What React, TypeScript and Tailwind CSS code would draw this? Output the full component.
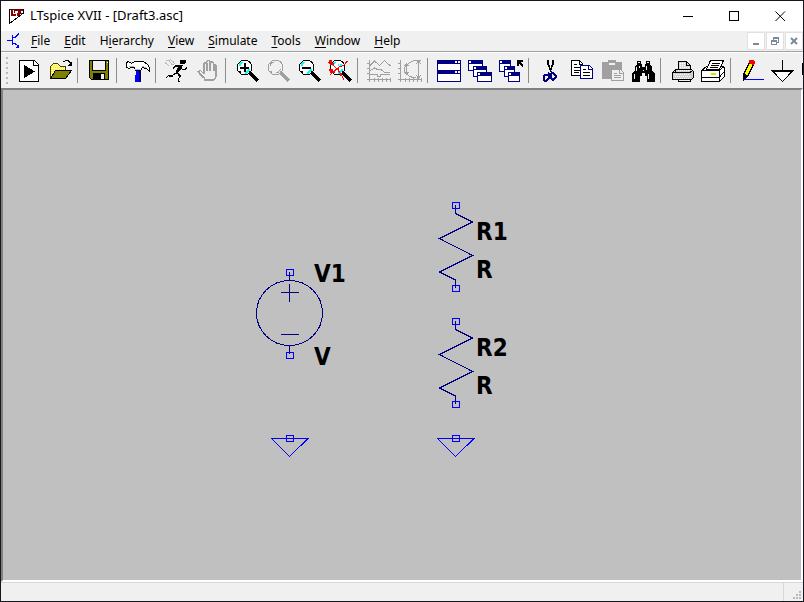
import type { ReactNode } from 'react'

const NAVY = '#000080'
const BLUE = '#0000ff'
const OLIVE = '#808000'
const GRAY = '#a0a0a0'

interface IconProps {
  children: ReactNode
  stroke?: string
}

function Icon({ children, stroke = '#000' }: IconProps) {
  return (
    <svg width="25" height="25" viewBox="0 0 25 25" fill="none" stroke={stroke} shapeRendering="crispEdges" aria-hidden="true">
      {children}
    </svg>
  )
}

const RunIcon = () => (
  <Icon>
    <path d="M2.5 2.5H17.5L21.5 6.5V23.5H2.5Z" fill="#fff" />
    <path d="M16.5 2.5V7.5H21.5" />
    <path d="M7 7L18 13.5L7 20Z" fill="#000" stroke="none" />
  </Icon>
)

const OpenIcon = () => (
  <Icon>
    <path d="M2.5 19.5V8.5L5.5 5.5H9.5L12.5 8.5H17.5V12.5H8.5Z" fill="#fff9a0" stroke="none" />
    <path d="M4 7.5h6M3 9.5h14M3 11.5h14M3 13.5h5M3 15.5h3" stroke="#ffe800" strokeDasharray="1 1" />
    <path d="M2.5 20V8.5L5.5 5.5H9.5L12.5 8.5H17.5V12.5" stroke="#404000" />
    <path d="M7.5 12.5H23.5L17.5 20.5H2.5Z" fill={OLIVE} />
    <path d="M15 3.5H17M17 2.5H20L22.5 5" />
    <path d="M24 3V8H19Z" fill="#000" stroke="none" />
  </Icon>
)

const SaveIcon = () => (
  <Icon>
    <path d="M2.5 2.5H21.5V21.5H4.5L2.5 19.5Z" fill={OLIVE} />
    <path d="M5.5 2.5H18.5V12.5H5.5Z" fill="#f0f0f0" />
    <path d="M6 15H18V22H6Z" fill="#000" stroke="none" />
    <path d="M14 16H17V21H14Z" fill="#f0f0f0" stroke="none" />
    <path d="M20 4.5h1" stroke="#fff" />
  </Icon>
)

const HammerIcon = () => (
  <Icon>
    <path d="M10 13H14V17H15V24H9V17H10Z" fill="#0000ff" stroke="none" />
    <path d="M14 13V24" stroke="#000060" strokeWidth="2" />
    <path d="M.5 9V4.5L2.5 3.5L5.5 5.5L8.5 3.5H17.5L21.5 6.5L23.5 9.5V13.5L20.5 10.5L16.5 9.5L14.5 12.5H9.5L8.5 9.5H5.5L2.5 10.5Z" fill="#fff" />
    <path d="M9 11.5H14M3 8.5H8M16 8.5L20 9.5" stroke="#b0b0b0" />
  </Icon>
)

const RunnerIcon = () => (
  <Icon>
    <path d="M15 2H21V4L19 6H15Z" fill="#000" stroke="none" />
    <path d="M14 7H18L16 11L13 15L10 16L12 11Z" fill="#000" stroke="none" />
    <path d="M15 7.5H10.5L7.5 11.5M16 9L17.5 11.5H20L22 9.5M11 15L7.5 17.5H4L1 19.5M12 14.5L15.5 18L13.5 21V23.5H15" />
    <path d="M10 8H14M4 18H8M14 17L16 19" strokeWidth="2" />
    <path d="M1 2.5H4L7 6.5H9M5 1.5L8 3.5L10 6M0 4.5L4 7.5" stroke="#b8b8b8" />
  </Icon>
)

const HandIcon = () => (
  <Icon stroke={GRAY}>
    <path d="M8.5 22.5V20.5L3.5 16.5L2.5 13.5L4.5 12.5L7.5 15.5V5.5L8.5 4.5L10.5 5.5V3.5L12.5 2.5L14.5 3.5V4.5L16.5 3.5L17.5 5.5V7L19.5 6.5L20.5 8.5V18.5L17.5 22.5Z" />
    <path d="M11 5V13M14 4V13M17.5 6V13M8 5V16M19.5 8V19M9 22H18" strokeWidth="2" />
    <path d="M2 13L4 15.5L8 20" strokeWidth="2" />
  </Icon>
)

const Glass = ({ disabled = false, children }: { disabled?: boolean; children?: ReactNode }) => (
  <Icon stroke={disabled ? GRAY : '#000'}>
    <path d="M15 15L23 23" strokeWidth="3" />
    <path d="M6.5 2.5H12.5L14.5 4.5L16.5 6.5V12.5L12.5 16.5H6.5L2.5 12.5V6.5Z" fill={disabled ? 'none' : '#fff'} />
    <path d="M3 5.5H5.5V3M14 3L16 6M3 13.5H5.5V16M14 13V16" />
    <path d="M4.5 8V6.5L7.5 4M14.5 11L12 14.5H10" stroke={disabled ? GRAY : '#00ffff'} strokeWidth={disabled ? 1 : 2} />
    {children}
  </Icon>
)

const ZoomInIcon = () => (
  <Glass>
    <path d="M5 9.5H14M9.5 5V14" strokeWidth="2" />
  </Glass>
)

const ZoomOutIcon = () => (
  <Glass>
    <path d="M5 9.5H14" strokeWidth="2" />
  </Glass>
)

const ZoomFitIcon = () => (
  <Glass>
    <path d="M0 4.5L4 6L9 11L13 16L16 22M19.5 3L16 7L11 9L5 14L2 17" stroke="#f00" />
    <path d="M1 2H4V5H6V7H2V5H1ZM1 11H5V13H7V15H2V13H1ZM8 10H11V12H8ZM12 15H14V18H12Z" fill="#f00" stroke="none" />
    <path d="M12 6H14V8H12ZM10 6H11V8H10Z" fill="#00ffff" stroke="none" />
  </Glass>
)

const WaveformIcon = () => (
  <Icon stroke={GRAY}>
    <path d="M2.5 2V24M0 5.5H3M0 10.5H3M0 15.5H3M0 21.5H24M7.5 20V24M11.5 20V24M15.5 20V24M19.5 20V24M23.5 20V24" />
    <path d="M3 7.5L7.5 3L12.5 7.5L17.5 2.5L23.5 8M3 12.5L7.5 10L10.5 11.5H14L18 14.5H23M3 16.5H10V18.5H13V16.5H23" />
  </Icon>
)

const FftIcon = () => (
  <Icon stroke={GRAY}>
    <path d="M2.5 2V24M0 5.5H3M0 10.5H3M0 15.5H3M0 21.5H24M7.5 20V24M11.5 20V24M15.5 20V24M19.5 20V24M23.5 20V24" />
    <path d="M22.5 2.5H16.5L11.5 4.5L6.5 9.5V13.5L11.5 18.5L17.5 20M20.5 3V20M18 6L20.5 3L23 6M18 17L20.5 20L23 17M8.5 6V16M6.5 8L8.5 5.5L10.5 8M6.5 14L8.5 16.5L10.5 14" />
  </Icon>
)

interface MiniWindowProps {
  x: number
  y: number
  w: number
  h: number
  buttons?: boolean
}

const MiniWindow = ({ x, y, w, h, buttons = false }: MiniWindowProps) => (
  <g transform={`translate(${x} ${y})`} stroke="none">
    <rect width={w} height={h} fill={NAVY} />
    <rect x="1" y="4" width={w - 2} height={h - 5} fill="#fff" />
    <path d={buttons ? `M${w - 3} 1h2v2h-2zM${w - 6} 1h2v2h-2z` : 'M1 1h2v2h-2z'} fill="#fff" />
  </g>
)

const TileIcon = () => (
  <Icon>
    <MiniWindow x={0} y={2} w={24} h={11} buttons />
    <MiniWindow x={0} y={12} w={24} h={12} buttons />
  </Icon>
)

const CascadeIcon = () => (
  <Icon>
    <MiniWindow x={0} y={2} w={15} h={11} />
    <MiniWindow x={5} y={8} w={14} h={11} />
    <MiniWindow x={9} y={14} w={15} h={10} />
  </Icon>
)

const CloseAllIcon = () => (
  <Icon>
    <MiniWindow x={0} y={2} w={12} h={12} />
    <MiniWindow x={5} y={8} w={11} h={11} />
    <MiniWindow x={9} y={14} w={12} h={10} />
    <path d="M18 2H24V4H21L24 7V9H23L20 6V8H18Z" fill="#000" stroke="none" />
  </Icon>
)

const CutIcon = () => (
  <Icon>
    <path d="M10.5 2V6L12.5 11M14.5 2V6L12.5 11V14" />
    <path d="M9.5 2V6L12.5 12.5M15.5 2V6L12.5 12.5" />
    <path d="M11 14.5L10.5 17.5V20.5L8.5 22.5H6.5L5.5 20.5V18L7.5 16.5H10M13 14L15.5 15.5L17.5 17V19.5L15.5 21.5H14.5L12.5 19.5V15" stroke={NAVY} strokeWidth="2" />
  </Icon>
)

const CopyIcon = () => (
  <Icon>
    <path d="M2.5 2.5H10.5L13.5 5.5V17.5H2.5Z" fill="#fff" />
    <path d="M10.5 2V6H14M5 6.5H8M5 9.5H11M5 12.5H11M5 14.5H10" />
    <path d="M11.5 7.5H20.5L23.5 10.5V20.5H11.5Z" fill="#fff" stroke={NAVY} />
    <path d="M19.5 7V11H24" stroke={NAVY} />
    <path d="M14 11.5H17M14 14.5H21M14 17.5H21" />
  </Icon>
)

const PasteIcon = () => (
  <Icon stroke={GRAY}>
    <path d="M2 4H8V2H16V4H22V21H2Z" fill={GRAY} stroke="none" />
    <path d="M9 5H15V7H9Z" fill="#f0f0f0" stroke="none" />
    <path d="M11.5 11.5H20.5L23.5 14.5V22.5H11.5Z" fill="#f0f0f0" />
    <path d="M19.5 11V15H24M14 15.5H17M14 17.5H21M14 19.5H21" />
  </Icon>
)

const FindIcon = () => (
  <Icon>
    <path d="M6 3H10V6H11V9H14V6H15V3H19V6L21 9V12L24 16V24H16V18H14V15H11V18H9V24H1V16L4 12V9L6 6Z" fill="#000" stroke="none" />
    <path d="M7 4.5H9M16 4.5H18M5.5 9V13M15.5 8V12M3.5 16V21M17.5 16V21M8.5 8V10M12 12.5H13" stroke="#f0f0f0" />
  </Icon>
)

const PrintIcon = () => (
  <Icon>
    <path d="M2.5 21.5V14.5L5.5 11.5H21.5L23.5 13.5V19.5L21.5 21.5Z" fill="#d0d0d0" />
    <path d="M8.5 11.5V3.5H16.5L20.5 7.5V11.5Z" fill="#d8d8d8" />
    <path d="M16.5 3V7.5H21M5.5 11.5V14M2 14.5H20L23 12M8.5 22V23.5H20.5V22" />
    <path d="M4 16.5H20M5 18.5H20M4 20.5H20M10 5.5H15M10 7.5H15M10 9.5H19M8 12.5H19" stroke="#fff" strokeDasharray="1 1" />
  </Icon>
)

const PrintSetupIcon = () => (
  <Icon>
    <path d="M.5 12.5L5.5 8.5H22.5L23.5 10.5V18.5L18.5 23.5H.5Z" fill="#fff" />
    <path d="M5.5 11.5L9.5 2.5H22.5L18.5 11.5Z" fill="#fff" />
    <path d="M11 5.5H19M10 7.5H18M9 9.5H17M0 12.5H18.5V23M18.5 12.5L23 8M0 19.5H18L23 14M20 17L24 13" />
    <path d="M10 16H15" stroke="#e0e000" strokeWidth="2" />
  </Icon>
)

const WireIcon = () => (
  <Icon>
    <path d="M3.5 16.5L9.5 4.5L13.5 6.5L7.5 18.5L3.5 21.5Z" fill="#ffff00" />
    <path d="M4 15L8 18L4 23H3Z" fill="#000" stroke="none" />
    <path d="M9 2H13L15 3V6L13 7L9 5Z" fill="#f00" stroke="none" />
    <path d="M4 21.5H24" stroke={BLUE} />
  </Icon>
)

const GroundIcon = () => (
  <Icon>
    <path d="M11.5 2V12" />
    <path d="M1 12.5H22L11.5 23.5Z" fill="#fff" />
    <path d="M0 12.5H23" />
    <path d="M1 13.5H22M3 15L11.5 23.5L20 15" />
  </Icon>
)

const LabelIcon = () => (
  <Icon>
    <path d="M.5 5.5H12L18 11L12 16.5H.5Z" fill="#fff" />
  </Icon>
)

const toolGroups = [
  [
    { label: 'Run', icon: <RunIcon /> },
    { label: 'Open', icon: <OpenIcon /> },
  ],
  [{ label: 'Save', icon: <SaveIcon /> }],
  [{ label: 'Control Panel', icon: <HammerIcon /> }],
  [
    { label: 'Simulate', icon: <RunnerIcon /> },
    { label: 'Halt', icon: <HandIcon />, disabled: true },
  ],
  [
    { label: 'Zoom in', icon: <ZoomInIcon /> },
    { label: 'Pan', icon: <Glass disabled />, disabled: true },
    { label: 'Zoom out', icon: <ZoomOutIcon /> },
    { label: 'Zoom full extents', icon: <ZoomFitIcon /> },
  ],
  [
    { label: 'Autorange', icon: <WaveformIcon />, disabled: true },
    { label: 'FFT', icon: <FftIcon />, disabled: true },
  ],
  [
    { label: 'Tile windows', icon: <TileIcon /> },
    { label: 'Cascade windows', icon: <CascadeIcon /> },
    { label: 'Close all', icon: <CloseAllIcon /> },
  ],
  [
    { label: 'Cut', icon: <CutIcon /> },
    { label: 'Copy', icon: <CopyIcon /> },
    { label: 'Paste', icon: <PasteIcon />, disabled: true },
    { label: 'Find', icon: <FindIcon /> },
  ],
  [
    { label: 'Print', icon: <PrintIcon /> },
    { label: 'Print setup', icon: <PrintSetupIcon /> },
  ],
  [
    { label: 'Wire', icon: <WireIcon /> },
    { label: 'Ground', icon: <GroundIcon /> },
    { label: 'Label net', icon: <LabelIcon /> },
  ],
]

const menus = ['File', 'Edit', 'Hierarchy', 'View', 'Simulate', 'Tools', 'Window', 'Help']
// index of the underlined access key in each menu name
const accessKeys: Record<string, number> = { Hierarchy: 1 }

function TitleBar() {
  return (
    <header className="flex h-[30px] items-center bg-white pl-[7px]">
      <svg width="17" height="17" viewBox="0 0 17 17" fill="none" shapeRendering="crispEdges" aria-hidden="true">
        <path d="M1.5 1V15.5L15.5 5V1" stroke="#000" />
        <path d="M3 1H5V6H8V8H3Z" fill="#900000" />
        <path d="M7 1H15V3H13L11 8H9L10 3H7Z" fill="#900000" />
        <path d="M6.5 2V5M2 1.5H15M12 4L14 7" stroke="#600000" />
      </svg>
      <h1 className="ml-[5px] flex-1 text-[13px]">LTspice XVII - [Draft3.asc]</h1>
      <button aria-label="Minimize" className="flex h-full w-[46px] items-center justify-center">
        <svg width="11" height="11" stroke="#000" shapeRendering="crispEdges"><path d="M0 5.5H10" /></svg>
      </button>
      <button aria-label="Maximize" className="flex h-full w-[46px] items-center justify-center">
        <svg width="11" height="11" stroke="#000" fill="none" shapeRendering="crispEdges"><path d="M.5 .5H9.5V9.5H.5Z" /></svg>
      </button>
      <button aria-label="Close" className="flex h-full w-[46px] items-center justify-center">
        <svg width="11" height="11" stroke="#000"><path d="M.5 .5L10 10M10 .5L.5 10" /></svg>
      </button>
    </header>
  )
}

function MenuBar() {
  return (
    <nav className="flex h-5 items-center bg-[#f0f0f0] pl-[6px]">
      <svg width="14" height="16" viewBox="0 0 14 16" fill="none" stroke={BLUE} shapeRendering="crispEdges" aria-hidden="true">
        <path d="M0 7.5H5M5.5 2V12M6 4.5H8L12 .5M6 10.5H8L12 14" />
        <path d="M12 11V15H8Z" fill={BLUE} stroke="none" />
      </svg>
      <ul className="ml-[3px] flex flex-1 text-xs">
        {menus.map((name) => {
          const k = accessKeys[name] ?? 0
          return (
            <li key={name}>
              <button className="px-[7px]">
                {name.slice(0, k)}
                <span className="underline underline-offset-2">{name[k]}</span>
                {name.slice(k + 1)}
              </button>
            </li>
          )
        })}
      </ul>
      <div className="flex gap-px">
        <button aria-label="Minimize document" className="flex h-[18px] w-[18px] items-center justify-center border border-[#e0e0e0] bg-white">
          <svg width="10" height="10" stroke="#7a8a99" strokeWidth="2" shapeRendering="crispEdges"><path d="M2 8H8" /></svg>
        </button>
        <button aria-label="Restore document" className="flex h-[18px] w-[18px] items-center justify-center border border-[#e0e0e0] bg-white">
          <svg width="10" height="10" stroke="#7a8a99" fill="none" shapeRendering="crispEdges"><path d="M3.5 4V1.5H8.5V6.5H7M3 2.5H9M1.5 4.5H6.5V8.5H1.5ZM1 5.5H7" /></svg>
        </button>
        <button aria-label="Close document" className="flex h-[18px] w-[18px] items-center justify-center border border-[#e0e0e0] bg-white">
          <svg width="10" height="10" stroke="#7a8a99" strokeWidth="2"><path d="M2 2L8 8M8 2L2 8" /></svg>
        </button>
      </div>
    </nav>
  )
}

function Toolbar() {
  return (
    <div role="toolbar" className="flex h-[37px] items-center overflow-hidden border-t border-[#a0a0a0] bg-[#f0f0f0] pl-[5px] shadow-[inset_0_1px_0_#fff]">
      <svg width="2" height="28" className="mr-[6px] shrink-0" shapeRendering="crispEdges" aria-hidden="true">
        <path d="M1 1V28" stroke="#b8b8b8" strokeWidth="2" strokeDasharray="2 3" />
      </svg>
      {toolGroups.map((group, g) => (
        <div key={g} className="flex shrink-0 items-center">
          {g > 0 && (
            <div className="w-2 pl-px">
              <div className="h-[25px] w-px bg-[#8c8c8c]" />
            </div>
          )}
          {group.map((tool) => (
            <button key={tool.label} aria-label={tool.label} disabled={'disabled' in tool} className="flex w-[31px] justify-center">
              {tool.icon}
            </button>
          ))}
        </div>
      ))}
    </div>
  )
}

const Pin = ({ x, y }: { x: number; y: number }) => (
  <rect x={x - 3.5} y={y - 3.5} width="7" height="6" stroke={BLUE} />
)

interface PartProps {
  x: number
  y: number
  name?: string
}

function Resistor({ x, y, name }: PartProps) {
  return (
    <g transform={`translate(${x} ${y})`}>
      <path d="M.5 0V8.5L17.5 17L-15.5 33.5L17.5 50.5L-15.5 67L.5 75V83" stroke={NAVY} />
      <Pin x={1} y={1} />
      <Pin x={1} y={84} />
      <text x="21" y="35">{name}</text>
      <text x="21" y="73">R</text>
    </g>
  )
}

function VoltageSource({ x, y, name }: PartProps) {
  return (
    <g transform={`translate(${x} ${y})`}>
      <ellipse cx=".5" cy="41" rx="33" ry="32.5" stroke={NAVY} />
      <path d="M.5 0V8M.5 74V82M-8 20.5H10M.5 12V30M-8 62.5H10" stroke={NAVY} />
      <Pin x={1} y={1} />
      <Pin x={1} y={84} />
      <text x="25" y="10">{name}</text>
      <text x="25" y="93">V</text>
    </g>
  )
}

function Ground({ x, y }: PartProps) {
  return (
    <g transform={`translate(${x} ${y})`}>
      <path d="M-17.5 .5H19L.5 18.5Z" stroke={BLUE} />
      <Pin x={1} y={1} />
    </g>
  )
}

function Schematic() {
  return (
    <main className="flex flex-1 border-2 border-t-[#808080] border-r-white border-b-white border-l-[#808080] bg-[#c0c0c0]">
      <svg
        className="min-h-[400px] flex-1 font-['DejaVu_Sans_Condensed','DejaVu_Sans',sans-serif] text-2xl font-bold [&_text]:fill-black [&_text]:stroke-none"
        fill="none"
        shapeRendering="crispEdges"
      >
        <VoltageSource x={286} y={182} name="V1" />
        <Resistor x={452} y={115} name="R1" />
        <Resistor x={452} y={231} name="R2" />
        <Ground x={286} y={348} />
        <Ground x={452} y={348} />
      </svg>
    </main>
  )
}

export default function App() {
  return (
    <div className="flex min-h-screen flex-col border border-[#18161c] bg-[#f0f0f0] font-['Noto_Sans','Open_Sans',sans-serif] text-black">
      <TitleBar />
      <MenuBar />
      <Toolbar />
      <Schematic />
      <footer className="flex h-[19px] justify-end border-t border-[#d8d8d8] bg-[#f0f0f0]">
        <div className="flex w-5 items-end justify-end border-l border-[#d8d8d8] p-px">
          <svg width="10" height="10" fill="#b8b8b8" aria-hidden="true">
            <path d="M7 1h2v2h-2zM4 4h2v2h-2zM7 4h2v2h-2zM1 7h2v2h-2zM4 7h2v2h-2zM7 7h2v2h-2z" />
          </svg>
        </div>
      </footer>
    </div>
  )
}
